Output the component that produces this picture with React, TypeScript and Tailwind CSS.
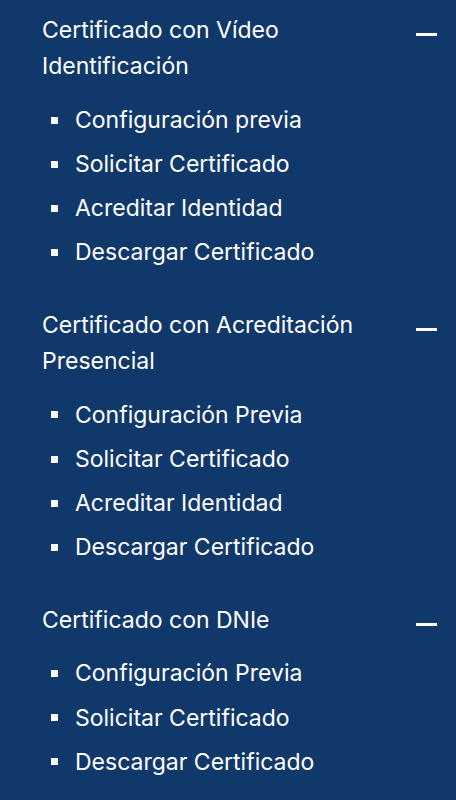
import React from "react";

const sections = [
  {
    title: "Certificado con Vídeo Identificación",
    items: ["Configuración previa", "Solicitar Certificado", "Acreditar Identidad", "Descargar Certificado"],
  },
  {
    title: "Certificado con Acreditación Presencial",
    items: ["Configuración Previa", "Solicitar Certificado", "Acreditar Identidad", "Descargar Certificado"],
  },
  {
    title: "Certificado con DNIe",
    items: ["Configuración Previa", "Solicitar Certificado", "Descargar Certificado"],
  },
];

export default function App() {
  return (
    <div
      className="w-[456px] h-[800px] bg-[#11386a] text-white pl-[42px] pr-[19px] pt-[12px] flex flex-col gap-[32px]"
      style={{ fontFamily: "Inter, 'Noto Sans', sans-serif" }}
    >
      {sections.map((s) => (
        <div key={s.title} className="flex flex-col gap-[14px]">
          <div className="flex justify-between items-start">
            <div className="text-[23px] leading-[36px] max-w-[340px]">{s.title}</div>
            <div className="w-[21px] h-[3px] bg-white mt-[21px]" />
          </div>
          <ul className="flex flex-col">
            {s.items.map((it) => (
              <li key={it} className="flex items-center h-[44.2px] text-[23px]">
                <span className="w-[7px] h-[7px] bg-white ml-[9px] mr-[17px]" />
                {it}
              </li>
            ))}
          </ul>
        </div>
      ))}
    </div>
  );
}
